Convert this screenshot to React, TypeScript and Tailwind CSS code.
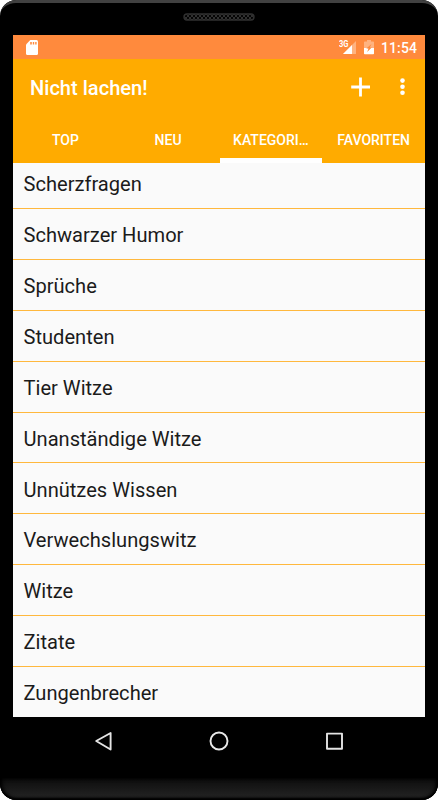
import { clsx } from 'clsx'

const tabs = [
    { name: 'TOP', active: false },
    { name: 'NEU', active: false },
    { name: 'KATEGORI…', active: true },
    { name: 'FAVORITEN', active: false },
]

const categories = [
    'Scherzfragen',
    'Schwarzer Humor',
    'Sprüche',
    'Studenten',
    'Tier Witze',
    'Unanständige Witze',
    'Unnützes Wissen',
    'Verwechslungswitz',
    'Witze',
    'Zitate',
    'Zungenbrecher',
]

function Speaker() {
    return (
        <svg className="mt-[10px]" width="72" height="8" viewBox="0 0 72 8">
            <defs>
                <pattern id="mesh" width="4" height="4" patternUnits="userSpaceOnUse">
                    <rect width="4" height="4" fill="#303030" />
                    <rect width="2" height="2" fill="#050505" />
                    <rect x="2" y="2" width="2" height="2" fill="#050505" />
                </pattern>
            </defs>
            <rect x="1" y="1" width="70" height="6" rx="3" fill="url(#mesh)" stroke="#303030" strokeWidth="1.4" />
        </svg>
    )
}

function StatusBar() {
    return (
        <div className="flex h-6 items-center bg-[#ff8a3d] pl-[13px] pr-[7px] text-white">
            <svg width="12" height="15" viewBox="0 0 12 15">
                <path d="M4.3 0H10.5Q12 0 12 1.5V13.5Q12 15 10.5 15H1.5Q0 15 0 13.5V4.5Z" fill="#fff" />
                <path d="M4.2 2h1.6v2.6H4.2zM6.8 2h1.4v2.6H6.8zM9.2 2h1.4v2.6H9.2z" fill="#ff8a3d" />
            </svg>
            <div className="ml-auto flex items-center">
                <svg width="18" height="15" viewBox="0 0 18 15">
                    <path d="M17 1V14H4Z" fill="#fff" opacity="0.35" />
                    <path d="M13 5V14H4Z" fill="#fff" />
                    <path d="M0 0H10V6.5L8 8.5H0Z" fill="#ff8a3d" />
                    <text x="0" y="6.8" fill="#fff" fontSize="8.5" fontWeight="700" textLength="9.5" lengthAdjust="spacingAndGlyphs">
                        3G
                    </text>
                </svg>
                <svg className="ml-[7px]" width="10" height="15" viewBox="0 0 10 15">
                    <path d="M3 0h4v1.5h2.2q.8 0 .8.8V8H0V2.3q0-.8.8-.8H3z" fill="#fff" opacity="0.35" />
                    <path d="M0 8h10v5.5q0 .8-.8.8H.8q-.8 0-.8-.8z" fill="#fff" />
                    <path d="M7.5 4L2.3 8.6h2.2L3.2 12L7.7 7.6H5.8z" fill="#ff8a3d" />
                </svg>
                <span className="ml-[7px] w-[37px] whitespace-nowrap pt-[2px] text-[14px] font-medium leading-[22px] tracking-[0.1px]">11:54</span>
            </div>
        </div>
    )
}

function AppBar() {
    return (
        <div className="flex h-[57px] items-center pb-[2px] pl-[17px] pr-4 text-white">
            <h1 className="pt-[2px] text-[20.1px] font-medium leading-6">Nicht lachen!</h1>
            <svg className="ml-auto" width="20" height="20" viewBox="0 0 20 20">
                <path d="M9.5 .5v19M.2 10h18.8" stroke="#fff" strokeWidth="2.8" />
            </svg>
            <svg className="ml-[25px]" width="13" height="18" viewBox="0 0 13 18">
                <circle cx="6.5" cy="2.6" r="2.3" fill="#fff" />
                <circle cx="6.5" cy="8.7" r="2.3" fill="#fff" />
                <circle cx="6.5" cy="14.8" r="2.3" fill="#fff" />
            </svg>
        </div>
    )
}

function TabBar() {
    return (
        <div className="grid h-[47px] grid-cols-4 pl-px text-[14px] font-medium text-white">
            {tabs.map((tab) => (
                <div
                    key={tab.name}
                    className={clsx(
                        'flex items-center justify-center whitespace-nowrap border-b-[5px] pt-[6px]',
                        tab.active ? 'border-white' : 'border-transparent'
                    )}
                >
                    {tab.name}
                </div>
            ))}
        </div>
    )
}

function NavBar() {
    return (
        <div className="flex h-[61px] items-start px-[94px] pt-[14px]">
            <svg width="20" height="20" viewBox="0 0 20 20" fill="none" stroke="#e4e4e4" strokeWidth="1.9" strokeLinejoin="round">
                <path d="M2.2 10L16.6 2V18.5Z" />
            </svg>
            <svg className="mx-auto" width="20" height="20" viewBox="0 0 20 20" fill="none" stroke="#e8e8e8" strokeWidth="1.9">
                <circle cx="10" cy="10" r="8.5" />
            </svg>
            <svg width="20" height="20" viewBox="0 0 20 20" fill="none" stroke="#e4e4e4" strokeWidth="1.9" strokeLinejoin="round">
                <rect x="3" y="2.6" width="15" height="15.2" />
            </svg>
        </div>
    )
}

export default function App() {
    return (
        <div className="h-[800px] w-[438px] bg-white font-['Roboto',sans-serif]">
            <div className="flex h-full flex-col overflow-hidden rounded-[16px] bg-black">
                <div className="flex h-[35px] flex-col items-center rounded-t-[16px] border-t-[3px] border-[#414141]">
                    <Speaker />
                </div>
                <div className="ml-[13px] w-[412px]">
                    <StatusBar />
                    <div className="bg-[#ffab00]">
                        <AppBar />
                        <TabBar />
                    </div>
                    {/* list is scrolled, so the first row is cut at the top */}
                    <ul className="flex h-[554px] flex-col justify-end overflow-hidden bg-[#fafafa]">
                        {categories.map((category) => (
                            <li
                                key={category}
                                className="flex h-[50.9px] shrink-0 items-center border-b border-[#ffb83d] pl-[10.5px] pt-[2.4px] text-[20.1px] text-[#1b1b1b] last:h-[50px] last:border-b-0"
                            >
                                {category}
                            </li>
                        ))}
                    </ul>
                </div>
                <NavBar />
                <div className="h-[22px] rounded-b-[16px] bg-linear-to-b from-[#0d0d0d] to-[#262626] shadow-[inset_0_-2px_2px_#000,inset_2px_0_4px_#000,inset_-2px_0_4px_#000]" />
            </div>
        </div>
    )
}
